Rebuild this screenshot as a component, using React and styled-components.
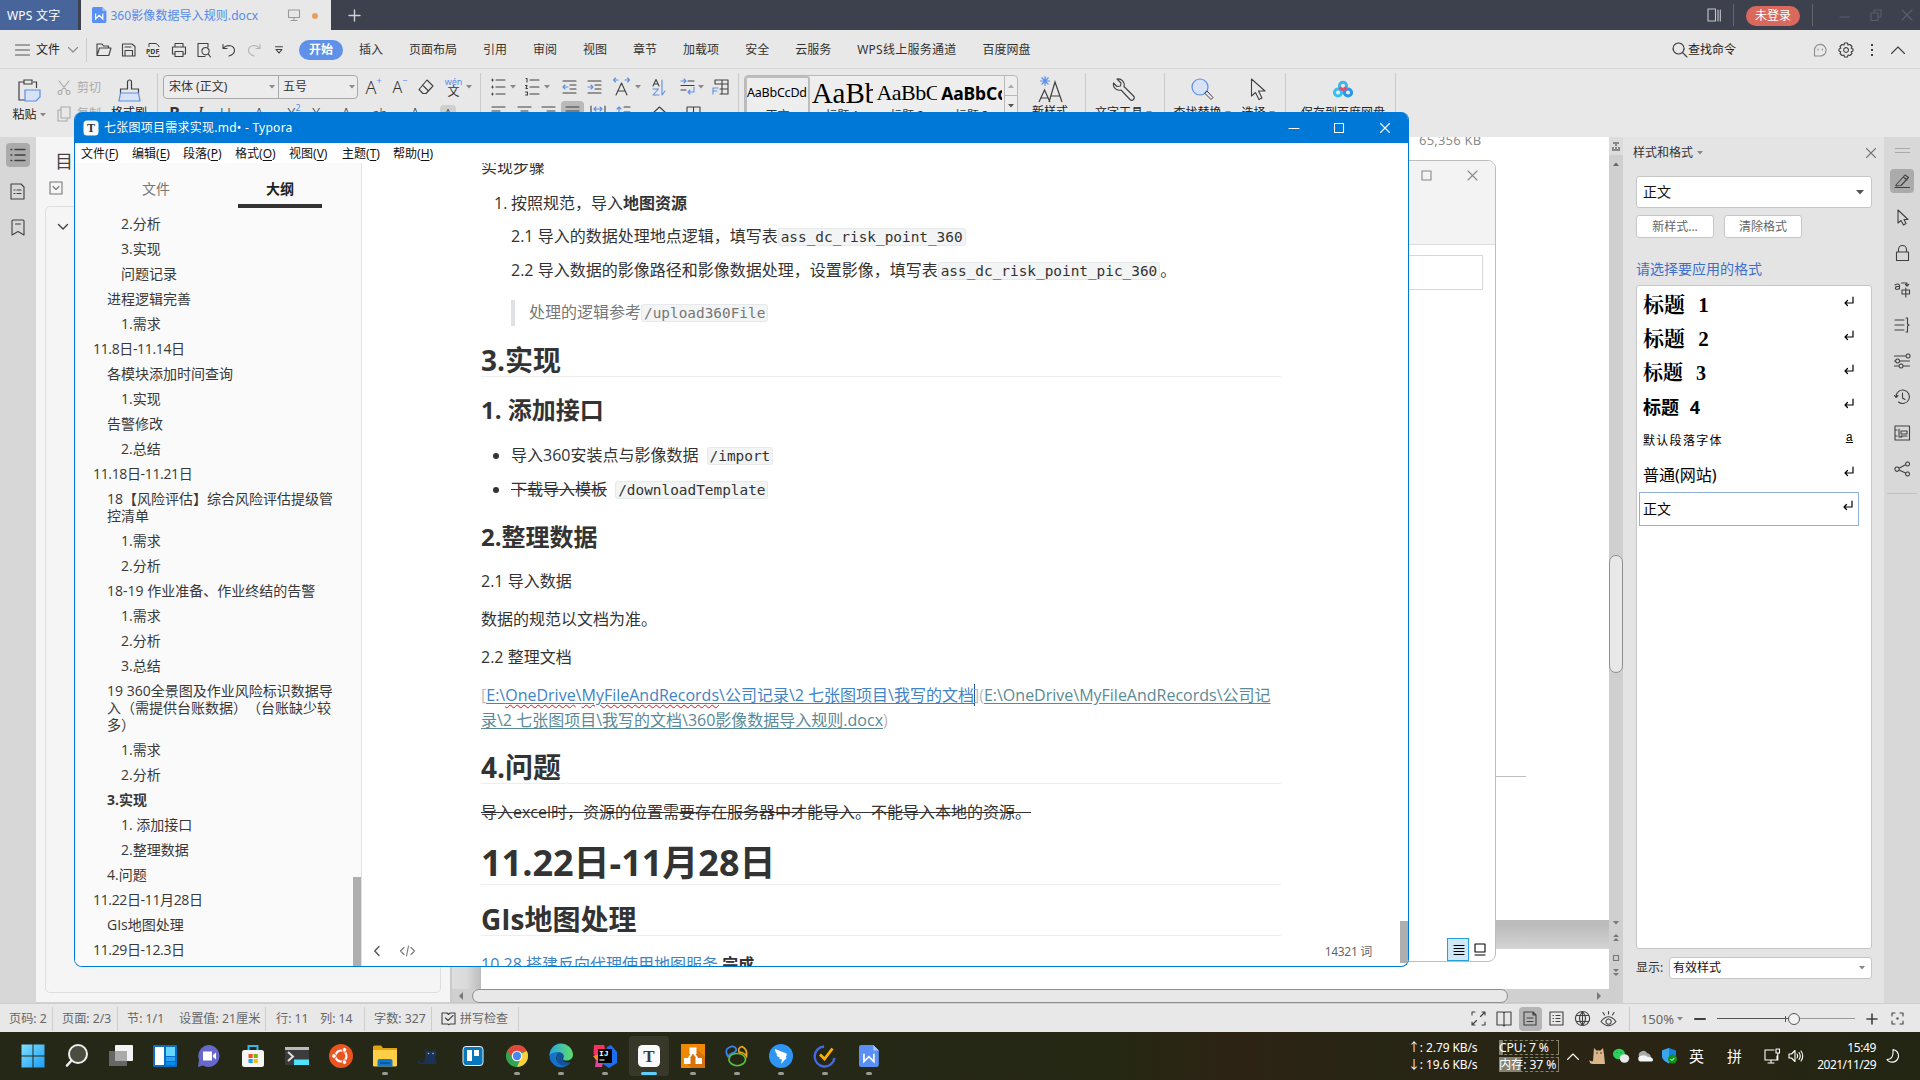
import React from 'react';
import styled, { createGlobalStyle } from 'styled-components';

const UI = `'Noto Sans', 'Noto Sans CJK SC', sans-serif`;
const DOC = `'Open Sans', 'Noto Sans CJK SC', sans-serif`;
const BLUE = '#5b8ee6';
const INK = '#404040';

const Global = createGlobalStyle`
  *, *::before, *::after { box-sizing: border-box; }
  html, body { margin: 0; padding: 0; overflow: hidden; }
  body { font: 12px/16px ${UI}; color: #333; white-space: nowrap; text-spacing-trim: space-all; }
  svg { display: block; flex: none; overflow: visible; }
`;

const Screen = styled.div`
  position: relative; width: 1920px; height: 1080px; overflow: hidden;
  display: flex; flex-direction: column; background: #e8e8e8;
`;

/* A box of fixed width that centres its content */
const Cell = styled.div`
  flex: none; display: flex; align-items: center; justify-content: ${p => p.$j || 'center'};
  width: ${p => p.$w}px; height: ${p => (p.$h ? p.$h + 'px' : 'auto')};
  margin-left: ${p => p.$ml || 0}px;
  background: ${p => p.$bg || 'transparent'}; border-radius: ${p => (p.$bg ? 4 : 0)}px;
`;
const Label = styled.span`
  flex: none; margin-left: ${p => p.$ml || 0}px; color: ${p => p.$c || 'inherit'};
  font-size: ${p => p.$s || 12}px; line-height: ${p => p.$lh || 16}px;
  font-weight: ${p => p.$b || 400}; letter-spacing: ${p => p.$ls || 0}px;
  font-family: ${p => p.$f || 'inherit'}; padding-top: ${p => p.$pt || 0}px;
`;
const Rule = styled.div`
  flex: none; width: 1px; height: ${p => p.$h}px; margin-left: ${p => p.$ml || 0}px;
  margin-top: ${p => p.$mt || 0}px; background: ${p => p.$c || '#cbcbcb'};
`;
const Spring = styled.div`flex: 1;`;

function Icon({ w = 16, h = 16, d, b, f, c = INK, sw = 1.1 }) {
  return (
    <svg width={w} height={h} viewBox={`0 0 ${w} ${h}`} fill="none" stroke={c} strokeWidth={sw} strokeLinecap="round" strokeLinejoin="round">
      {f && <path d={f} fill={c} stroke="none" />}
      {d && <path d={d} />}
      {b && <path d={b} stroke={BLUE} />}
    </svg>
  );
}
const Caret = ({ c = '#888', up }) => <Icon w={6} h={4} c={c} f={up ? 'M0 4L3 0.5L6 4Z' : 'M0 0H6L3 3.5Z'} />;

/* ---------- Title bar ---------- */
const TitleBar = styled.div`
  flex: none; height: 30px; display: flex; align-items: center; background: #3d414d;
`;
const AppTab = styled.div`
  width: 78px; height: 30px; padding-left: 7px; line-height: 32px; background: #47659b; color: #fff; letter-spacing: 0.2px;
`;
const DocTab = styled.div`
  width: 250px; height: 30px; margin-left: 3px; padding-left: 11px; display: flex; align-items: center; background: #e8e8e8; color: #5488ea;
`;
const Dot = styled.div`width: 6px; height: 6px; border-radius: 50%; background: #e8a05c; margin: 1px 0 0 12px;`;
const Login = styled.div`
  width: 54px; height: 20px; margin: 1px 0 0 12px; border-radius: 10px; background: #d9695c; color: #fff; text-align: center; line-height: 19px;
`;

function WpsLogo({ s = 16 }) {
  return (
    <svg width={s * 0.9} height={s} viewBox="0 0 18 20">
      <path d="M2 0H13L18 5V18A2 2 0 0 1 16 20H2A2 2 0 0 1 0 18V2A2 2 0 0 1 2 0Z" fill="#5a90f5" />
      <path d="M13 0L18 5H13Z" fill="#a9c6fb" />
      <path d="M4.5 8V15L9 10.5L13.5 15V8" fill="none" stroke="#fff" strokeWidth="1.5" />
    </svg>
  );
}

function Title() {
  return (
    <TitleBar>
      <AppTab>WPS 文字</AppTab>
      <DocTab>
        <WpsLogo s={16} />
        <Label $ml={4} $pt={2} $ls={0.08}>360影像数据导入规则.docx</Label>
        <Cell $w={12} $ml={30}><Icon w={12} h={12} c="#999" d="M0.5 1H11.5V8.5H0.5ZM6 8.5V11.5M3 11.5H9" /></Cell>
        <Dot />
      </DocTab>
      <Cell $w={46}><Icon w={13} h={13} c="#d0d1d4" sw={1.4} d="M6.5 1V12M1 6.5H12" /></Cell>
      <Spring />
      <Icon w={14} h={14} c="#c5c7cc" d="M1 1H8.5V13H1ZM11 2V13M13.3 2V13" />
      <Rule $h={22} $ml={12} $c="#62666f" />
      <Login>未登录</Login>
      <Rule $h={22} $ml={12} $c="#62666f" />
      <Cell $w={10} $ml={27}><Icon w={10} h={10} c="#5b5f6b" d="M0 7H9.5" /></Cell>
      <Cell $w={12} $ml={20}><Icon w={12} h={12} c="#5b5f6b" d="M1 4H8V11.5H1ZM4 4V1H11V8H8" /></Cell>
      <Cell $w={12} $ml={19}><Icon w={12} h={12} c="#5b5f6b" d="M1 1L11 11M11 1L1 11" /></Cell>
      <Cell $w={7} />
    </TitleBar>
  );
}

/* ---------- Menu row ---------- */
const MenuRow = styled.div`
  flex: none; height: 39px; padding: 1px 0 0 15px; display: flex; align-items: center;
  border-bottom: 1px solid #d6d6d6; background: #e8e8e8;
`;
const Tab = styled.div`margin-right: 26px; line-height: 16px; padding-top: 1px; letter-spacing: ${p => p.$ls || 0}px;`;
const ActiveTab = styled.div`
  width: 44px; height: 20px; margin: 0 16px 0 8px; border-radius: 10px; background: #5f91ea; color: #fff;
  font-weight: 700; text-align: center; line-height: 20px;
`;
const quick = [
  'M1 13.5V2H6L7.5 4H12.5V6M1 13.5L3.5 6H15L12.8 13.5Z',
  'M1.5 2H11L14 4.5V14H1.5ZM4 5H10M4 14V8.5H11.5V14',
  'M3 5V1.5H10L13 4V5M3 12.5V14.5H13V12.5',
  'M4 5V1.5H12V5M3.5 12H1.5V5H14.5V12H12.5M4 9.5H12V14.5H4Z',
  'M9 14.5H2V1.5H12V5M9.5 5.5A3.7 3.7 0 1 0 9.6 5.5M12 11.7L14.5 15',
];
function Menu() {
  return (
    <MenuRow>
      <Icon w={15} h={12} c="#555" d="M0.5 1H14.5M0.5 6H14.5M0.5 11H14.5" />
      <Label $ml={6} $c="#222">文件</Label>
      <Cell $w={10} $ml={8}><Icon w={10} h={6} c="#888" d="M0.5 0.5L5 5L9.5 0.5" /></Cell>
      <Rule $h={24} $ml={8} />
      {quick.map((d, i) => (
        <Cell key={i} $w={25} $ml={i ? 0 : 4}>
          {i === 2
            ? <svg width="16" height="16" fill="none" stroke={INK}><path d={d} /><text x="0" y="11.6" fontSize="7" fontWeight="700" fontFamily="Noto Sans" stroke="none" fill={INK}>PDF</text></svg>
            : <Icon d={d} />}
        </Cell>
      ))}
      <Cell $w={26}><Icon w={14} h={14} d="M1 1.5V5.5H5M1.2 5.2C5 1 12.5 2 12.5 7.5C12.5 10 10 12 7 13" /></Cell>
      <Cell $w={24}><Icon w={14} h={14} c="#b4b4b4" d="M13 1.5V5.5H9M12.8 5.2C9 1 1.5 2 1.5 7.5C1.5 10 4 12 7 13" /></Cell>
      <Cell $w={25}><Icon w={8} h={8} d="M0.5 0.8H7.5M1 3.5H7L4 6.8Z" /></Cell>
      <ActiveTab>开始</ActiveTab>
      {['插入', '页面布局', '引用', '审阅', '视图', '章节', '加载项', '安全', '云服务', 'WPS线上服务通道', '百度网盘'].map(t => <Tab key={t} $ls={t[0] === 'W' ? 0.25 : 0}>{t}</Tab>)}
      <Spring />
      <Icon w={16} h={16} d="M6.5 1A5.5 5.5 0 1 0 6.6 1M10.5 10.5L15 15" />
      <Label $c="#222">查找命令</Label>
      <Cell $w={14} $ml={77}><Icon w={14} h={14} c="#8c8c8c" d="M1.5 13V7A5.8 5.8 0 1 1 7 13ZM5 6V7M9.3 6V7" /></Cell>
      <Cell $w={16} $ml={11}>
        <Icon w={16} h={16} d="M6.5 1H9.5L10 3L12 2.5L14 4.5L13.2 6.3L15 7V9L13.2 9.7L14 11.5L12 13.5L10 13L9.5 15H6.5L6 13L4 13.5L2 11.5L2.8 9.7L1 9V7L2.8 6.3L2 4.5L4 2.5L6 3ZM8 5.6A2.4 2.4 0 1 0 8.1 5.6" />
      </Cell>
      <Cell $w={4} $ml={16}><Icon w={4} h={14} f="M1 1H3V3H1ZM1 6H3V8H1ZM1 11H3V13H1Z" /></Cell>
      <Cell $w={14} $ml={17}><Icon w={14} h={8} d="M0.5 7.5L7 1L13.5 7.5" /></Cell>
      <Cell $w={15} />
    </MenuRow>
  );
}

/* ---------- Ribbon ---------- */
const Ribbon = styled.div`
  flex: none; height: 68px; display: flex; align-items: flex-start; overflow: hidden; background: #e8e8e8;
`;
const Rows = styled.div`flex: none; display: flex; flex-direction: column; gap: 2px; padding-top: 6px; margin-left: ${p => p.$ml || 0}px; width: ${p => p.$w}px;`;
const Row = styled.div`display: flex; align-items: center; height: 24px; padding-top: ${p => p.$pt || 0}px;`;
const Big = styled.div`
  flex: none; width: ${p => p.$w}px; margin-left: ${p => p.$ml || 0}px; padding: ${p => p.$pt || 7}px 0 0 ${p => p.$pl || 0}px; display: flex; flex-direction: column; align-items: center;
  color: #222;
`;
const BigLabel = styled.div`margin-top: ${p => p.$mt || 5}px; display: flex; align-items: center; gap: 3px; line-height: 16px;`;
const FontBox = styled.div`
  flex: none; width: 195px; height: 24px; display: flex; align-items: center; border: 1px solid #a9a9a9; border-radius: 4px; background: #ececec;
`;
const FontName = styled.div`
  width: ${p => p.$w}px; height: 22px; display: flex; align-items: center; justify-content: space-between; padding: 0 ${p => p.$pr}px 0 ${p => p.$pl}px;
  border-right: ${p => (p.$last ? 0 : 1)}px solid #a9a9a9;
`;
const Gallery = styled.div`
  flex: none; display: flex; margin: 6px 0 0 5px; width: 274px; height: 62px; border: 1px solid #b9b9b9; border-radius: 4px; background: #eee;
`;
const Sample = styled.div`
  width: 65px; height: 60px; overflow: hidden; display: flex; flex-direction: column; align-items: center; color: #000;
  border: ${p => (p.$on ? '2px solid #bdbdbd' : '0')}; border-radius: 3px; padding-top: ${p => (p.$on ? 0 : 2)}px;
  font-family: ${p => p.$f}; 
`;
const SampleText = styled.div`
  width: 61px; overflow: hidden; height: 30px; line-height: 30px; font-size: ${p => p.$s}px; font-weight: ${p => p.$b || 400}; letter-spacing: ${p => p.$ls || 0}px;
`;
const SampleName = styled.div`font: 12px/16px ${UI}; color: #333;`;
const GalleryScroll = styled.div`
  width: 13px; height: 60px; border-left: 1px solid #b9b9b9; display: flex; flex-direction: column;
  & > div { width: 12px; height: 20px; border-bottom: 1px solid #b9b9b9; display: flex; align-items: center; justify-content: center; }
`;
const Wen = styled.div`display: flex; flex-direction: column; align-items: center; line-height: 9px; font-size: 9px; color: ${BLUE}; span { font-size: 12px; line-height: 12px; color: #333; }`;
const SupBlue = styled.span`color: ${BLUE}; font-size: 9px; line-height: 10px; align-self: flex-start; margin-top: ${p => p.$t || 0}px;`;
const Letter = styled(Label)`font-weight: 300; text-decoration: ${p => p.$u ? 'underline' : 'none'}; font-style: ${p => p.$i ? 'italic' : 'normal'};`;

function BaiduMark() {
  return (
    <svg width="20" height="17" viewBox="0 0 20 17" fill="none" strokeWidth="3">
      <circle cx="5" cy="11.5" r="3.6" stroke="#35c1f1" /><circle cx="15" cy="11.5" r="3.6" stroke="#2a97ea" />
      <circle cx="10" cy="4.8" r="3.6" stroke="#3cb7ee" /><path d="M6.6 6.3Q9 10.5 13.4 6.3" stroke="#f04a6a" />
    </svg>
  );
}

function RibbonBar() {
  return (
    <Ribbon>
      <Big $w={46} $ml={6} $pt={10}>
        <svg width="23" height="23" fill="none" stroke={INK} strokeWidth="1.2"><path d="M6 3H1V21H7M15 3H18.500V9M6 1H14V5H6Z" /><path d="M7 11H22V18L18 22H7Z" fill="#d7e2f6" stroke={BLUE} /></svg>
        <BigLabel>粘贴 <Caret /></BigLabel>
      </Big>
      <Rows $ml={5} $w={50}>
        <Row $pt={1}><Icon w={14} h={15} c="#a9a9a9" d="M2 1L10 11M12 1L4 11M3 10.500A2 2 0 1 0 3.100 10.500M11 10.500A2 2 0 1 0 11.100 10.500" /><Label $ml={6} $c="#aaa">剪切</Label></Row>
        <Row $pt={2}><Icon w={14} h={16} c="#a9a9a9" d="M4 1H13V12H4ZM4 4H1V15H10V12" /><Label $ml={6} $c="#aaa">复制</Label></Row>
      </Rows>
      <Big $w={44} $pt={10}>
        <svg width="23" height="23" fill="none" stroke={INK} strokeWidth="1.2"><path d="M2.500 14V10H9.500V3A2 2 0 0 1 13.500 3V10H20.500V14" /><path d="M2.500 14H20.500L22 22H1Z" fill="#d7e2f6" stroke={BLUE} /></svg>
        <BigLabel $mt={3}>格式刷</BigLabel>
      </Big>
      <Rule $h={64} $ml={6} $mt={4} />
      <Rows $ml={5} $w={317}>
        <Row>
          <FontBox>
            <FontName $w={115} $pl={5} $pr={3}>宋体 (正文) <Caret /></FontName>
            <FontName $w={78} $pl={4} $pr={2} $last>五号 <Caret /></FontName>
          </FontBox>
          <Cell $w={31} $h={24}><Letter $s={18} $lh={22}>A</Letter><SupBlue $t={1}>+</SupBlue></Cell>
          <Cell $w={22} $h={24}><Letter $s={16} $lh={22}>A</Letter><SupBlue $t={1}>−</SupBlue></Cell>
          <Cell $w={30}><Icon w={16} h={16} d="M9 1L15 7L8 14.500H5L1 10.500ZM4.500 6L10.500 12" /></Cell>
          <Cell $w={25}><Wen>wén<span>文</span></Wen></Cell>
          <Cell $w={6}><Caret /></Cell>
        </Row>
        <Row>
          <Cell $w={23}><Label $s={16} $b={700}>B</Label></Cell>
          <Cell $w={29}><Letter $s={16} $i $f="'Liberation Serif', serif">I</Letter></Cell>
          <Cell $w={21}><Letter $s={15} $u>U</Letter></Cell>
          <Cell $w={46}><Letter $s={15}>A</Letter></Cell>
          <Cell $w={24} $h={20}><Letter $s={15}>X</Letter><SupBlue>2</SupBlue></Cell>
          <Cell $w={20}><Letter $s={15}>X</Letter></Cell>
          <Cell $w={40}><Letter $s={15}>A</Letter></Cell>
          <Cell $w={28}><Letter $s={13}>ab</Letter></Cell>
          <Cell $w={42}><Letter $s={15}>A</Letter></Cell>
          <Cell $w={16} $ml={4} $h={16} $bg="#cfcfcf"><Letter $s={13}>A</Letter></Cell>
        </Row>
      </Rows>
      <Rule $h={64} $mt={4} />
      <Rows $ml={6} $w={251}>
        <Row>
          <Cell $w={22}><Icon w={15} h={18} d="M5 2H14M5 9H14M5 16H14M1.500 1V3M1.500 8V10M1.500 15V17M0.800 2H2.200M0.800 9H2.200M0.800 16H2.200" /></Cell>
          <Cell $w={8}><Caret /></Cell>
          <Cell $w={22} $ml={4}><Icon w={15} h={18} d="M5 2H14M5 9H14M5 16H14M1 0.500H2V4M0.500 7.500H2L1 10.500H2.500M0.500 14H2.500V17H0.500" /></Cell>
          <Cell $w={8}><Caret /></Cell>
          <Cell $w={24} $ml={6}><Icon w={15} h={14} d="M1 1H14M8 5H14M8 9H14M1 13H14" b="M6 7H1M3 5L1 7L3 9" /></Cell>
          <Cell $w={26}><Icon w={15} h={14} d="M1 1H14M8 5H14M8 9H14M1 13H14" b="M1 7H6M4 5L6 7L4 9" /></Cell>
          <Cell $w={26} $ml={2}><Icon w={18} h={18} d="M3 17L8.500 5L14 17M5 13H12" b="M5 2H0.500M2.500 0L0.500 2L2.500 4M12 2H16.500M14.500 0L16.500 2L14.500 4" /></Cell>
          <Cell $w={5}><Caret /></Cell>
          <Cell $w={20} $ml={9}><Icon w={14} h={17} d="M1 7L4 0.500L7 7M2 5H6" b="M1 10H6.500L1 16H7M10 1V16L13 12" /></Cell>
          <Cell $w={18} $ml={10}><Icon w={16} h={16} d="M8 2H14M1 6.500H14M1 11H6" b="M1 2H6M4 0L6 2L4 4M14 8V13H8M10 11L8 13L10 15" /></Cell>
          <Cell $w={8}><Caret /></Cell>
          <Cell $w={22} $ml={4}><Icon w={17} h={16} d="M3 5V1H16V15H8M3 5H16M10 1V15M8 10H16" b="M1 15V9H6M1 12H5" /></Cell>
        </Row>
        <Row>
          <Cell $w={22}><Icon w={15} h={14} d="M1 1H14M1 5H9M1 9H14M1 13H9" /></Cell>
          <Cell $w={26} $ml={2}><Icon w={15} h={14} d="M1 1H14M4 5H11M1 9H14M4 13H11" /></Cell>
          <Cell $w={22}><Icon w={15} h={14} d="M1 1H14M6 5H14M1 9H14M6 13H14" /></Cell>
          <Cell $w={23} $ml={2} $h={24} $bg="#b9b9b9"><Icon w={15} h={14} d="M1 1H14M1 5H14M1 9H14M1 13H14" /></Cell>
          <Cell $w={22} $ml={3}><Icon w={16} h={14} d="M1 0V14M15 0V14M4 9H12" b="M4 3H12M6 1L4 3L6 5M10 1L12 3L10 5" /></Cell>
          <Cell $w={26} $ml={1}><Icon w={15} h={14} d="M8 1H14M8 6H14M8 11H14" b="M3 13V1M1 3L3 1L5 3" /></Cell>
          <Cell $w={22} $ml={13}><Icon w={16} h={14} d="M1 7L7.500 1L14 7L8 13Z" /></Cell>
          <Cell $w={22} $ml={11}><Icon w={15} h={14} d="M1 1H14V13H1ZM7.500 1V13M1 7H14" /></Cell>
        </Row>
      </Rows>
      <Rule $h={64} $mt={4} />
      <Gallery>
        <Sample $on $f={UI}><SampleText $s={12.5} $ls={-0.2}>AaBbCcDd</SampleText><SampleName>正文</SampleName></Sample>
        <Sample $f="'Liberation Serif', 'DejaVu Serif', serif"><SampleText $s={29} $ls={0}>AaBbC</SampleText><SampleName>标题 1</SampleName></Sample>
        <Sample $f="'Liberation Serif', serif"><SampleText $s={22} $ls={-0.5}>AaBbC</SampleText><SampleName>标题 2</SampleName></Sample>
        <Sample $f={UI}><SampleText $s={17.5} $b={700} $ls={-0.1}>AaBbCc</SampleText><SampleName>标题 3</SampleName></Sample>
        <GalleryScroll><div><Caret up c="#aaa" /></div><div><Caret c="#555" /></div><div /></GalleryScroll>
      </Gallery>
      <Big $w={64}>
        <svg width="25" height="27" fill="none" stroke={INK} strokeWidth="1.2"><path d="M1 26L6.500 14L12 26M3 22H10M11 26L17 6L24 26M13.500 20H21.500" /><path d="M7 0V10M2 5H12M3.500 1.500L10.500 8.500M10.500 1.500L3.500 8.500" stroke={BLUE} /></svg>
        <BigLabel $mt={1}>新样式</BigLabel>
      </Big>
      <Rule $h={64} $ml={3} $mt={4} />
      <Big $w={75} $pt={9}>
        <Icon w={23} h={23} d="M5 1L9 5L8.500 8L5 8.500L1.500 5A6 6 0 0 0 9 12L18 21.500A2.200 2.200 0 0 0 21.500 18L12 8.500A6 6 0 0 0 5 1Z" />
        <BigLabel $mt={4}>文字工具 <Caret /></BigLabel>
      </Big>
      <Rule $h={64} $ml={3} $mt={4} />
      <Big $w={74} $pt={9}>
        <svg width="23" height="23" fill="none"><circle cx="9" cy="9" r="8" fill="#d7e2f6" stroke={BLUE} strokeWidth="1.200" /><path d="M14.500 14L16 13L22 19.500L20 21.500L14 15.500Z" stroke={INK} /></svg>
        <BigLabel $mt={4}>查找替换 <Caret /></BigLabel>
      </Big>
      <Big $w={36} $ml={1} $pt={9}>
        <Icon w={17} h={23} d="M1.500 1V18L5.500 14.500L9 21.500L12 20L8.500 13H15Z" />
        <BigLabel $mt={4}>选择 <Caret /></BigLabel>
      </Big>
      <Rule $h={64} $ml={9} $mt={4} />
      <Big $w={109} $pl={5} $pt={12}>
        <BaiduMark />
        <BigLabel $mt={7}>保存到百度网盘</BigLabel>
      </Big>
      <Rule $h={64} $mt={4} />
    </Ribbon>
  );
}

/* ---------- Work area ---------- */
const Work = styled.div`flex: none; height: 866px; display: flex;`;
const LeftBar = styled.div`width: 36px; background: #d7d7d7; display: flex; flex-direction: column; align-items: center; padding-top: 6px;`;
const LeftBtn = styled.div`
  width: 24px; height: 24px; margin-bottom: 12px; border-radius: 4px; display: flex; align-items: center; justify-content: center;
  background: ${p => (p.$on ? '#ababab' : 'transparent')}; padding-right: ${p => (p.$on ? 0 : 1)}px;
`;
const Nav = styled.div`width: 414px; background: #f5f5f5; padding: 14px 9px 9px 9px; display: flex; flex-direction: column; border-bottom: 1px solid #d0d0d0;`;
const NavTitle = styled.div`font-size: 18px; line-height: 20px; padding-left: 10px; color: #444;`;
const NavTool = styled.div`padding: 10px 0 11px 4px;`;
const NavBox = styled.div`flex: 1; border: 1px solid #dedede; border-radius: 5px; padding: 17px 12px; `;
const Canvas = styled.div`width: 1159px; border-left: 2px solid #cacaca; display: flex; flex-direction: column;`;
const Pages = styled.div`height: 852px; display: flex; overflow: hidden;`;
const PageEdge = styled.div`width: 29px; background: linear-gradient(90deg, #dedede, #dadada 50%, #bcbcbc);`;
const PageCol = styled.div`flex: 1; display: flex; flex-direction: column; align-items: flex-end;`;
const Page = styled.div`width: 100%; height: ${p => p.$h}px; background: #fff; overflow: hidden; display: flex; flex-direction: column; align-items: flex-end;`;
const SizeText = styled.div`
  align-self: flex-start; margin-left: 938px; margin-top: -6px; height: 20px; line-height: 19px; font-size: 13px; letter-spacing: 0.2px; color: #8c8c8c;
`;
const PageLine = styled.div`height: 1px; width: 83px; margin: 625px 83px 0 0; background: #bfbfbf;`;
const PageGap = styled.div`width: 100%; height: 29px; background: linear-gradient(180deg, #bcbcbc 20%, #d4d4d4);`;
const HBar = styled.div`height: 14px; display: flex; align-items: center; background: #d0d0d0; border-bottom: 1px solid #c8c8c8; padding-left: 6px;`;
const HThumb = styled.div`width: 1036px; height: 14px; margin-left: 8px; border: 1px solid #8f8f8f; border-radius: 7px; background: #e8e8e8;`;
const VBar = styled.div`width: 14px; background: #cfcfcf; display: flex; flex-direction: column; align-items: center;`;
const VTop = styled.div`height: 18px; width: 14px; background: #dcdcdc; display: flex; justify-content: center; padding-top: 5px; margin-bottom: 7px;`;
const VThumb = styled.div`width: 14px; height: 118px; margin: 389px 0 248px; border: 1px solid #8f8f8f; border-radius: 7px; background: #e8e8e8;`;

const Panel = styled.div`width: 261px; background: #e4e4e4; padding: 8px 12px 0 13px; display: flex; flex-direction: column;`;
const PanelHead = styled.div`height: 16px; margin-left: -3px; margin-right: -4px; display: flex; align-items: center; gap: 4px;`;
const Combo = styled.div`
  height: ${p => p.$h}px; width: ${p => p.$w || 236}px; margin-top: ${p => p.$mt || 0}px; border: 1px solid #c6c6c6; border-radius: 3px; background: #fff; display: flex; align-items: center; justify-content: space-between;
  padding: 0 ${p => p.$pr || 7}px 0 ${p => p.$pl || 6}px; color: #111; font-size: ${p => p.$s || 14}px;
`;
const Buttons = styled.div`display: flex; gap: 10px; margin-top: 7px;`;
const Btn = styled.div`width: 78px; height: 23px; border: 1px solid #c6c6c6; border-radius: 3px; background: #fff; text-align: center; line-height: 22px; color: #666;`;
const Hint = styled.div`margin-top: 21px; font-size: 14px; line-height: 20px; color: #3e6fcb;`;
const List = styled.div`width: 236px; height: 664px; margin-top: 6px; border: 1px solid #c6c6c6; border-radius: 3px; background: #fff; padding: 2px;`;
const Item = styled.div`
  width: 220px; height: 34px; display: flex; align-items: center; justify-content: space-between; padding: 0 5px 0 ${p => (p.$on ? 3 : 4)}px;
  border: ${p => (p.$on ? 1 : 0)}px solid #8fb0dc; color: #000;
  & > :last-child { margin-bottom: 7px; }
`;
const ItemName = styled(Label)`word-spacing: ${p => p.$ws || 0}px;`;
const ShowRow = styled.div`display: flex; align-items: center; justify-content: space-between; margin-top: 8px;`;
const SideBar = styled.div`width: 36px; background: #d8d8d8; display: flex; flex-direction: column; align-items: center; padding-top: 11px;`;
const Grip = styled.div`width: 15px; height: 5px; margin-bottom: 16px; border: solid #aaa; border-width: 1px 0;`;
const SideBtn = styled.div`
  width: 24px; height: 24px; margin-bottom: 12px; border-radius: 4px; display: flex; align-items: center; justify-content: center;
  background: ${p => (p.$on ? '#ababab' : 'transparent')};
`;
const sideIcons = [
  'M1 14.500H15.500M2 12L11 2L14.500 4.500L7 12.500L2 13ZM10 4.500L13 7',
  'M4 1V14L7 11.500L9.500 16L12 14.500L10 10.500H14Z',
  'M2.500 7H14.500V15.500H2.500ZM4.500 7V4.500A4 4 0 0 1 12.500 4.500V7',
  'M1 4Q4 2 5.500 4V8M5.500 5.500H2.500Q0 8 3 8.500Q5 8 5.500 7M7.500 2H13V5M11.500 3.500L13 5L14.800 3.500M8 9H15.500V13H8ZM11.800 7V16',
  'M1 3H10M1 8H10M1 13H10M12 1H13.500V7L15 8L13.500 9V15H12',
  'M0.500 3H12M14 1A2 2 0 1 0 14.100 1M0.500 8H2M3.500 6A2 2 0 1 0 3.600 6M6 8H15.500M0.500 13H5M7 11A2 2 0 1 0 7.100 11M9.500 13H15.500',
  'M2 8A6.700 6.700 0 1 1 4.500 13M0.500 6.500L2 8.500L4 6.500M8.500 4V9L11 10.500',
  'M1 1H15.500V15H1ZM1 5H3M1 11H3M5 4V12H8M7 6H13V9H7ZM7 11H13',
  'M3 6A2.200 2.200 0 1 0 3.100 6M13.500 1A2 2 0 1 0 13.600 1M13.500 11A2 2 0 1 0 13.600 11M5 7.200L11.500 3.800M5 9L11.500 12',
];
const Enter = () => <Icon w={10} h={10} c="#000" sw={1.2} d="M9 0V6H1M3.500 3.500L1 6L3.500 8.500" />;
const CharMark = styled.span`font: 12px/12px 'Liberation Mono', monospace; text-decoration: underline; margin-right: 1px;`;

const SERIF = `'Liberation Serif', 'Noto Serif CJK SC', 'Noto Sans CJK SC', serif`;
const styles = [
  { t: '标题 1', s: 21, b: 700, f: SERIF, ws: 8 },
  { t: '标题 2', s: 21, b: 700, f: SERIF, ws: 8 },
  { t: '标题 3', s: 20, b: 700, f: SERIF, ws: 8 },
  { t: '标题 4', s: 18, b: 700, f: UI, ws: 6 },
  { t: '默认段落字体', s: 12, b: 400, f: UI, ls: 1.3 },
  { t: '普通(网站)', s: 16, b: 400, f: UI },
  { t: '正文', s: 14, b: 400, f: UI, on: true },
];

function WorkArea() {
  return (
    <Work>
      <LeftBar>
        <LeftBtn $on><Icon w={16} h={14} d="M5 1.500H15M5 7H15M5 12.500H15M1 1.500H1.800M1 7H1.800M1 12.500H1.800" sw={1.4} /></LeftBtn>
        <LeftBtn><Icon w={15} h={17} d="M1 1H11L14 4V16H1ZM4 7H5M7 7H11M4 10.500H5M7 10.500H11" /></LeftBtn>
        <LeftBtn><Icon w={14} h={17} d="M1 2A1 1 0 0 1 2 1H12A1 1 0 0 1 13 2V16L7 12.500L1 16ZM4.500 5H9.500" /></LeftBtn>
      </LeftBar>
      <Nav>
        <NavTitle>目录</NavTitle>
        <NavTool><Icon w={14} h={14} c="#777" d="M1 1H13V13H1ZM4 5.500L7 8.500L10 5.500" /></NavTool>
        <NavBox><Icon w={10} h={6} d="M0.500 0.500L5 5L9.500 0.500" sw={1.4} /></NavBox>
      </Nav>
      <Canvas>
        <Pages>
          <PageEdge />
          <PageCol>
            <Page $h={783}><SizeText>65,356 KB</SizeText><PageLine /></Page>
            <PageGap />
            <Page $h={40} />
          </PageCol>
        </Pages>
        <HBar>
          <Icon w={6} h={8} c="#777" f="M5 0V8L1 4Z" />
          <HThumb />
          <Spring />
          <Cell $w={6}><Icon w={6} h={8} c="#777" f="M1 0V8L5 4Z" /></Cell>
          <Cell $w={7} />
        </HBar>
      </Canvas>
      <VBar>
        <VTop><Icon w={8} h={9} c="#888" f="M1 0H7V2H5V4H3V2H1ZM0 5H2V7H3V5H5V7H6V5H8V9H0Z" /></VTop>
        <Caret up c="#666" />
        <VThumb />
        <Icon w={6} h={55} c="#777" f="M0 0H6L3 3.500ZM0 16L3 13L6 16ZM0 20L3 17L6 20ZM0 48H6L3 51ZM0 52H6L3 55Z" d="M0.500 34.500H5.500V39.500H0.500Z" />
      </VBar>
      <Panel>
        <PanelHead><span>样式和格式</span><Caret /><Spring /><Icon w={10} h={10} c="#777" d="M0.500 0.500L9.500 9.500M9.500 0.500L0.500 9.500" /></PanelHead>
        <Combo $h={32} $mt={15}>正文<Icon w={8} h={5} c="#555" f="M0 0H8L4 4.500Z" /></Combo>
        <Buttons><Btn>新样式...</Btn><Btn>清除格式</Btn></Buttons>
        <Hint>请选择要应用的格式</Hint>
        <List>
          {styles.map(s => (
            <Item key={s.t} $on={s.on}>
              <ItemName $s={s.s} $b={s.b} $f={s.f} $ls={s.ls} $lh={30} $ws={s.ws}>{s.t}</ItemName>
              {s.s === 12 ? <CharMark>a</CharMark> : <Enter />}
            </Item>
          ))}
        </List>
        <ShowRow>显示:<Combo $h={22} $w={203} $pl={3} $pr={6} $s={12}>有效样式<Caret /></Combo></ShowRow>
      </Panel>
      <SideBar>
        <Grip />
        {sideIcons.map((d, i) => <SideBtn key={i} $on={i === 0}><Icon w={16} h={16} d={d} /></SideBtn>)}
        <Cell $w={30} $h={1} $bg="#c2c2c2" />
      </SideBar>
    </Work>
  );
}

/* ---------- Status bar ---------- */
const Status = styled.div`flex: none; height: 29px; border-top: 1px solid #cfcfcf; background: #e8e8e8; display: flex; align-items: center; color: #666; padding: 1px 0 0 8px;`;
const Stat = styled.div`flex: none; width: ${p => p.$w}px; height: 24px; line-height: 24px; border-right: ${p => (p.$r ? 1 : 0)}px solid #cdcdcd; padding-left: ${p => p.$pl || 0}px; display: flex; align-items: center; font-size: 12.2px;`;
const Slider = styled.div`width: 138px; height: 14px; margin-left: 11px; display: flex; align-items: center;`;
const Track = styled.div`height: 1px; width: ${p => p.$w}px; background: ${p => p.$c};`;
const Knob = styled.div`width: 12px; height: 12px; border: 1px solid #555; border-radius: 50%; background: #f2f2f2;`;

function StatusBar() {
  return (
    <Status>
      <Stat $w={45} $r $pl={1}>页码: 2</Stat>
      <Stat $w={65} $r $pl={9}>页面: 2/3</Stat>
      <Stat $w={61} $pl={9}>节: 1/1</Stat>
      <Stat $w={87} $r>设置值: 21厘米</Stat>
      <Stat $w={54} $pl={10}>行: 11</Stat>
      <Stat $w={45} $r>列: 14</Stat>
      <Stat $w={67} $r $pl={9}>字数: 327</Stat>
      <Stat $w={87} $r $pl={9}>
        <Icon w={15} h={13} d="M7 12H1V1H6L7.500 2.500L9 1H14V12H9L7.500 12.800ZM4.500 6L7 8.500L12 3.500" />
        <Label $ml={4}>拼写检查</Label>
      </Stat>
      <Spring />
      <Icon w={15} h={15} d="M1 4V1H4M11 1H14V4M14 11V14H11M4 14H1V11M9.500 5.500L13.500 1.500M5.500 9.500L1.500 13.500" />
      <Cell $w={16} $ml={10}><Icon w={16} h={15} d="M1 1H7L8 2L9 1H15V14H9L8 15L7 14H1ZM8 2V14" /></Cell>
      <Cell $w={23} $h={24} $ml={7} $bg="#b5b5b5"><Icon w={14} h={15} d="M1 1H10L13 4V14H1ZM4 7H10M4 10.500H10M10 1V4H13" /></Cell>
      <Cell $w={15} $ml={7}><Icon w={15} h={15} d="M1 1H14V14H1ZM4 4.500H4.500M7 4.500H11M4 7.500H4.500M7 7.500H11M4 10.500H4.500M7 10.500H11" /></Cell>
      <Cell $w={15} $ml={11}><Icon w={15} h={15} d="M7.500 0.500A7 7 0 1 0 7.600 0.500M7.500 0.500Q1.500 7.500 7.500 14.500Q13.500 7.500 7.500 0.500M7.500 0.500V14.500M1.500 4.500H13.500M1.500 10.500H13.500" /></Cell>
      <Cell $w={17} $ml={10}><Icon w={17} h={16} d="M1 10.500Q8.500 1 16 10.500Q8.500 19 1 10.500ZM8.500 8A2.600 2.600 0 1 0 8.600 8M8.500 0.500V3M3 1.500L4.500 4M14 1.500L12.500 4" /></Cell>
      <Rule $h={24} $ml={12} />
      <Label $ml={11} $s={13}>150%</Label>
      <Cell $w={6} $ml={3}><Caret /></Cell>
      <Cell $w={12} $ml={11}><Icon w={12} h={2} sw={2} d="M1 1H11" /></Cell>
      <Slider>
        <Track $w={68} $c="#555" /><Rule $h={6} $c="#555" /><Track $w={2} $c="#555" />
        <Knob /><Track $w={55} $c="#999" />
      </Slider>
      <Cell $w={12} $ml={11}><Icon w={12} h={12} sw={1.6} d="M6 1V11M1 6H11" /></Cell>
      <Cell $w={13} $ml={13}><Icon w={13} h={13} d="M1 4V1H4M9 1H12V4M12 9V12H9M4 12H1V9" f="M5.500 5.500H7.500V7.500H5.500Z" /></Cell>
      <Cell $w={16} />
    </Status>
  );
}

/* ---------- Taskbar ---------- */
const Taskbar = styled.div`
  flex: none; height: 48px; padding-left: 11px; display: flex; align-items: center; color: #fff;
  background: linear-gradient(90deg, #262817 0%, #262817 45%, #252813 58%, #2d2314 64%, #272513 72%, #2a2414 86%, #222613 100%);
`;
const Task = styled.div`
  flex: none; position: relative; width: 40px; height: 40px; margin: 0 2px; border-radius: 4px; display: flex; align-items: center; justify-content: center;
  background: ${p => (p.$on ? 'rgba(255,255,255,0.08)' : 'transparent')};
  &::after { content: ''; position: absolute; bottom: 1px; left: ${p => (p.$on ? 12 : 17)}px; width: ${p => (p.$on ? 16 : 6)}px; height: 3px; border-radius: 2px;
    background: ${p => (p.$on ? '#60cdff' : '#9a9a94')}; display: ${p => (p.$run ? 'block' : 'none')}; }
`;
const Meter = styled.div`display: flex; flex-direction: column; margin-left: ${p => p.$ml}px; width: ${p => p.$w}px; gap: ${p => p.$g || 0}px;`;
const Line = styled.div`height: 17px; line-height: 17px; font-size: 12px; letter-spacing: ${p => p.$ls || 0}px; text-align: ${p => p.$a || 'left'};`;
const Gauge = styled.div`
  height: 15px; line-height: 13px; font-size: 12.2px; letter-spacing: -0.1px; border: 1px dashed #85856c; border-left: 0;
  background: linear-gradient(90deg, #85826f ${p => p.$v}%, transparent ${p => p.$v}%);
`;
const S = ({ children }) => <svg width="24" height="24" viewBox="0 0 24 24">{children}</svg>;

const tasks = [
  [0, <S><defs><linearGradient id="w" x2="1" y2="1"><stop stopColor="#7fe0ff" /><stop offset="1" stopColor="#1a9df5" /></linearGradient></defs><path d="M0.500 0.500H11.500V11.500H0.500ZM12.500 0.500H23.500V11.500H12.500ZM0.500 12.500H11.500V23.500H0.500ZM12.500 12.500H23.500V23.500H12.500Z" fill="url(#w)" /></S>],
  [0, <S><circle cx="13" cy="10" r="9" fill="#4b4d40" stroke="#eee" strokeWidth="2" /><path d="M6.500 16.500L2 21.500" stroke="#eee" strokeWidth="2.600" strokeLinecap="round" /></S>],
  [0, <S><rect x="6" y="1" width="18" height="16" rx="1" fill="#f3f3f3" /><path d="M0 7H18V22H0Z" fill="#666" /><path d="M6 7H18V17H6Z" fill="#aaa" /></S>],
  [0, <S><rect y="1" width="24" height="22" rx="1" fill="#0d6cc4" /><path d="M2 3H11V21H2Z" fill="#fff" /><path d="M13 3H22V12H13Z" fill="#65d6ff" /><path d="M13 13H22V17H13Z" fill="#29a5f5" /><path d="M13 18H22V21H13Z" fill="#0b8ae6" /></S>],
  [0, <S><path d="M12.500 1A11 11 0 1 1 6 21.500L1 23L2 16A11 11 0 0 1 12.500 1Z" fill="#6668cc" /><path d="M6 7.500H15V16.500H6ZM16 11L19 8.500V15.500L16 13Z" fill="#fff" /></S>],
  [0, <S><path d="M7.500 6V2H16.500V6" fill="none" stroke="#35b8ee" strokeWidth="2" /><rect x="1" y="6" width="22" height="17" rx="2.500" fill="#f5f5f5" /><path d="M7.500 10H11.700V14H7.500Z" fill="#f0502a" /><path d="M12.600 10H16.800V14H12.600Z" fill="#7db700" /><path d="M7.500 15H11.700V19H7.500Z" fill="#1aa2ee" /><path d="M12.600 15H16.800V19H12.600Z" fill="#fdb813" /></S>],
  [0, <S><path d="M0 3H24V21H0Z" fill="#3c3c3c" /><path d="M0 3H24V6H0Z" fill="#bbb" /><path d="M9 15.500H24V21H9Z" fill="#4fe3fb" /><path d="M3 8L8 12.500L3 17" fill="none" stroke="#ddd" strokeWidth="2" /></S>],
  [0, <S><circle cx="12" cy="12" r="12" fill="#e95420" /><circle cx="12" cy="12" r="5.500" fill="none" stroke="#fff" strokeWidth="2.200" /><g fill="#fff" stroke="#e95420" strokeWidth="1"><circle cx="5" cy="12" r="2.400" /><circle cx="15.500" cy="5.900" r="2.400" /><circle cx="15.500" cy="18.100" r="2.400" /></g></S>],
  [1, <S><path d="M0 3A1.500 1.500 0 0 1 1.500 1.500H8L10 4H24V22H0Z" fill="#e2a30f" /><path d="M0 6H24V21A1.500 1.500 0 0 1 22.500 22.500H1.500A1.500 1.500 0 0 1 0 21Z" fill="#ffcf48" /><path d="M4.500 22.500V17A2 2 0 0 1 6.500 15H17.500A2 2 0 0 1 19.500 17V22.500Z" fill="#1378cc" /><path d="M7 19H17" stroke="#0a4f94" strokeWidth="1.500" /></S>],
  [0, <S><path d="M8 4L10.500 7H16L18.500 4L19.500 11L18 13L19.500 20H7Q0 21 1 16Q4 20 7 18L8.500 13Z" fill="#1d3257" /><circle cx="11.500" cy="9.500" r="0.800" fill="#8cf" /><circle cx="16" cy="9.500" r="0.800" fill="#8cf" /></S>],
  [0, <S><rect x="2" y="2.500" width="20" height="19" rx="3" fill="#0a77bd" stroke="#e9f2f8" strokeWidth="1" /><path d="M6 6H11V17H6ZM13 6H18V12H13Z" fill="#fff" /></S>],
  [1, <S><circle cx="12" cy="12" r="11" fill="#35a452" /><path d="M12 12L21.800 7A11 11 0 0 1 12 23L16 14Z" fill="#fbd03b" /><path d="M2.500 6.500A11 11 0 0 1 21.800 7H12L7.500 14Z" fill="#e2483a" /><circle cx="12" cy="12" r="5.300" fill="#fff" /><circle cx="12" cy="12" r="4.200" fill="#4a86ec" /></S>],
  [1, <S><defs><linearGradient id="e" x2="1"><stop stopColor="#2aa6e0" /><stop offset="1" stopColor="#5fdc6b" /></linearGradient></defs><path d="M0.500 12A11.700 11.700 0 0 1 24 10.500C24 15 20 17 16.500 16.500Q13 16 14.500 13.500Q15.500 9 10 8.500Q3 8.500 0.500 12Z" fill="url(#e)" /><path d="M0.500 11Q4 7.500 10 8.500Q5 14 9 18.500Q14 23 21.500 18.500A11.600 11.600 0 0 1 0.500 11Z" fill="#1572c8" /><path d="M10 8.500Q14 8.500 14.500 12L13.500 14.500Q14 19 21.500 18.500Q16 24 10 20Q5 14 10 8.500Z" fill="#12529e" /></S>],
  [1, <S><path d="M1 1H11L13 8L5 14L0.500 10Z" fill="#fc2f63" /><path d="M0 12L6 10V18L3 16Z" fill="#f98a1d" /><path d="M14 3L18 1L24 8V19L16 24L10 20Z" fill="#1a6ef2" /><path d="M3 16L10 19L9 23L2 23Z" fill="#e0449b" /><path d="M5 5H19V19H5Z" fill="#000" /><text x="6" y="12" fontSize="8" fontWeight="700" fill="#fff" fontFamily="Liberation Mono, monospace">IJ</text><path d="M6.500 16H11.500" stroke="#fff" /></S>],
  [1, <S><rect x="1" y="1" width="22" height="22" rx="4.500" fill="#fafafa" /><text x="12" y="18" textAnchor="middle" fontSize="17" fontWeight="700" fill="#3a3a3a" fontFamily="Liberation Serif, serif">T</text></S>, true],
  [1, <S><path d="M0 0H24V24H0Z" fill="#f08705" /><path d="M15 4L24 13V24H11L5 19Z" fill="#d8720a" /><path d="M12 8L6.500 16M12 8L17.500 16" stroke="#fff" strokeWidth="1.800" /><path d="M8.500 3.500H15.500V10H8.500ZM3 14H9.500V20H3ZM14.500 14H21V20H14.500Z" fill="#fff" /></S>],
  [1, <S><g fill="none" strokeWidth="1.700"><path d="M3 12.500Q-1 6 4 3.500Q9 1 11 4.500Q12 7 9 8.500Q4.500 9.500 3 12.500Z" stroke="#3b82ee" /><path d="M14 8Q12.500 4 17 2.500Q22.500 5 21.500 12Q19.500 8.500 14 8Z" stroke="#f1a51e" /><path d="M5 12.500Q7 9.500 12 9.500Q17.500 9.500 19.500 12.500Q22 16 18.500 19.500Q12 24 6 19.500Q2.500 16 5 12.500Z" stroke="#57c13b" /></g></S>],
  [1, <S><circle cx="12" cy="12" r="12" fill="#2f95f3" /><path d="M6 5L17.500 9.500Q18.500 11 16.500 13.500H18L12 20L13 15.500L10 15L11 13.500Q7.500 12.500 7.500 10.500L9 10.600Q6 9 6 5Z" fill="#fff" /></S>],
  [1, <S><path d="M11 2.500A10 10 0 1 0 21.500 14" fill="none" stroke="#4468e8" strokeWidth="2.400" /><path d="M7 10.500L11.500 15L19.500 4.500" fill="none" stroke="#ffb000" strokeWidth="2.800" /></S>],
  [1, <WpsLogo s={22} />],
];

const Tray = ({ ml, children }) => <Cell $w={16} $ml={ml}><svg width="16" height="16" viewBox="0 0 16 16">{children}</svg></Cell>;

function TaskBar() {
  return (
    <Taskbar>
      {tasks.map(([run, icon, on], i) => <Task key={i} $run={run} $on={on}>{icon}</Task>)}
      <Spring />
      <Meter $w={91} $ml={0}><Line $ls={-0.1}>↑: 2.79 KB/s</Line><Line $ls={-0.1}>↓: 19.6 KB/s</Line></Meter>
      <Meter $w={60} $ml={0} $g={2}><Gauge $v={7}>CPU: 7 %</Gauge><Gauge $v={37}>内存: 37 %</Gauge></Meter>
      <Cell $w={12} $ml={8}><Icon w={12} h={7} c="#fff" d="M0.500 6.500L6 1L11.500 6.500" /></Cell>
      <Tray ml={10}><path d="M5 0L7.500 2.500H11.500L14 0L15 6L16 16H4Q0 16 0.500 12Q2 14 4 13Z" fill="#dcb588" /><circle cx="8" cy="5" r="0.800" fill="#333" /><circle cx="12" cy="5" r="0.800" fill="#333" /></Tray>
      <Tray ml={8}><ellipse cx="6" cy="6" rx="6" ry="5.200" fill="#2fd15c" /><ellipse cx="11.500" cy="10.500" rx="4.700" ry="4.200" fill="#e9e9e9" /><circle cx="4" cy="4.500" r="0.800" fill="#0a5" /><circle cx="8" cy="4.500" r="0.800" fill="#0a5" /></Tray>
      <Tray ml={8}><path d="M2 9A4.500 4.500 0 0 1 10 5Q14 6 14 10L4 12Z" fill="#a8a8a8" /><path d="M3 13.500A3 3 0 0 1 3 8Q8 6 11 9Q16 9 16 12Q16 13.500 14 13.500Z" fill="#f5f5f5" /></Tray>
      <Tray ml={8}><path d="M8 0L15 2.500V8Q14 13 8 15.500Q1 12 1 8V2.500Z" fill="#1682dc" /><path d="M8 0V15.500Q1 12 1 8V2.500Z" fill="#3aa6f0" /><circle cx="11.500" cy="11" r="4.500" fill="#13921c" /><path d="M9.500 11L11 12.500L13.500 9.800" stroke="#fff" fill="none" /></Tray>
      <Label $ml={12} $s={15}>英</Label>
      <Label $ml={23} $s={15}>拼</Label>
      <Cell $w={17} $ml={22}><Icon w={17} h={16} c="#fff" d="M10 2H1V12H13V8M4 15H10M7 12V15M12 1H15.500V5H12ZM13.800 5V12" /></Cell>
      <Cell $w={16} $ml={7}><Icon w={16} h={14} c="#fff" d="M1 5H3.500L7 1.500V12.500L3.500 9H1ZM9 5Q10.500 7 9 9M11 3.500Q13.500 7 11 10.500M13 2Q16.500 7 13 12" /></Cell>
      <Meter $w={70} $ml={2}><Line $a="right" $ls={-0.4}>15:49</Line><Line $a="right" $ls={-0.5}>2021/11/29</Line></Meter>
      <Cell $w={14} $ml={10}><Icon w={14} h={14} c="#fff" d="M7 0.500Q13 2 12.500 8Q10.500 14 4.500 13Q2 12.500 1 10.500Q8 10.500 7 0.500Z" /></Cell>
      <Cell $w={20} />
    </Taskbar>
  );
}

/* ---------- Explorer window ---------- */
const Explorer = styled.div`
  position: absolute; left: 1300px; top: 160px; width: 196px; height: 802px; border: 1px solid #bdbdbd; border-radius: 8px; background: #fff;
  display: flex; flex-direction: column; overflow: hidden;
`;
const ExHead = styled.div`height: 84px; background: #f3f3f3; border-bottom: 1px solid #dcdcdc; display: flex; padding: 9px 17px 0 0; justify-content: flex-end; gap: 35px;`;
const ExSearch = styled.div`width: 201px; height: 35px; margin: 10px 0 0 -19px; border: 1px solid #d6d6d6;`;
const ExFoot = styled.div`margin-top: auto; height: 23px; display: flex; justify-content: flex-end; align-items: center; gap: 5px; padding-right: 9px;`;
const ExView = styled.div`width: 22px; height: 23px; border: 1px solid #26a0da; background: #d0e8f5; display: flex; align-items: center; justify-content: center; padding-left: 2px;`;

/* ---------- Typora window ---------- */
const Typora = styled.div`
  position: absolute; left: 74px; top: 112px; width: 1335px; height: 855px; border: 1px solid #0078d7; border-top: 0; border-radius: 8px;
  background: #fff; overflow: hidden; display: flex; flex-direction: column;
`;
const TTitle = styled.div`flex: none; height: 31px; background: #0078d7; color: #fff; display: flex; align-items: center; padding: 0 18px 0 8px;`;
const TMenu = styled.div`flex: none; height: 20px; display: flex; align-items: center; padding: 2px 0 0 6px; color: #111; line-height: 18px; u { text-underline-offset: 2px; }`;
const TItem = styled.div`width: ${p => p.$w}px;`;
const TBody = styled.div`height: 803px; display: flex;`;
const Side = styled.div`width: 287px; background: #fafafa; border-right: 1px solid #e3e3e3; display: flex;`;
const SideMain = styled.div`width: 278px; font-family: ${DOC};`;
const SideTabs = styled.div`display: flex; height: 45px; padding-left: 39px; gap: 40px;`;
const SideTab = styled.div`
  width: 84px; height: 45px; padding-top: 16px; text-align: center; font-size: 14px; line-height: 20px; color: ${p => (p.$on ? '#222' : '#777')};
  font-weight: ${p => (p.$on ? 700 : 400)}; border-bottom: ${p => (p.$on ? '4px solid #333' : '0')};
`;
const Outline = styled.div`padding-top: 3px;`;
const OItem = styled.div`
  padding: 4px 0 4px ${p => [0, 18, 32, 46][p.$l]}px; font-size: 14px; line-height: 17px; color: #383838; font-weight: ${p => (p.$on ? 700 : 400)}; white-space: pre;
  letter-spacing: ${p => (p.$l === 1 ? -0.35 : 0)}px;
`;
const Bar = styled.div`width: 8px; height: ${p => p.$h}px; margin-top: ${p => p.$mt}px; background: #aeaeae;`;
const Editor = styled.div`width: 1046px; display: flex; flex-direction: column;`;
const Scroll = styled.div`height: 803px; overflow: hidden; display: flex;`;
const Doc = styled.div`width: 1038px; padding: 0 119px; font: 16px/26px ${DOC}; color: #333;`;
const P = styled.div`height: 26px; line-height: 26px; margin-top: ${p => p.$mt}px; padding-left: ${p => p.$in || 0}px; color: ${p => p.$c || '#333'};`;
const H = styled.div`
  height: ${p => p.$h}px; line-height: ${p => p.$h + (p.$s === 28 ? 1 : -1)}px; margin-top: ${p => p.$mt}px; font-size: ${p => p.$s}px; font-weight: 700; color: #333;
  border-bottom: ${p => (p.$u ? '1px solid #eee' : '0')};
`;
const Quote = styled.div`height: 26px; line-height: 25px; margin: 17px 0 0 30px; padding-left: 14px; border-left: 4px solid #dfe2e5; color: #777;`;
const Code = styled.code`
  font: 14.4px/14px 'DejaVu Sans Mono', monospace; padding: 0 2px; border: 1px solid #e7eaed; border-radius: 3px; background: #f3f4f4; margin-left: ${p => p.$ml || 0}px;
`;
const Marker = styled.span`display: inline-block; width: 30px; padding-left: ${p => p.$pl}px;`;
const Bullet = styled.i`display: inline-block; width: 6px; height: 6px; border-radius: 50%; background: #333; vertical-align: 2px;`;
const LinkBlock = styled.div`margin-top: 12px; height: 51px; line-height: 25px; color: #bbb; padding-top: 1px;`;
const Href = styled.span`color: ${p => p.$c || '#4183c4'}; text-decoration: ${p => (p.$plain ? 'none' : 'underline')}; text-underline-offset: 2px;`;
const Typo = styled.span`text-decoration: underline wavy #e01010 0.7px; text-underline-offset: 3px;`;
const CaretLine = styled.span`display: inline-block; width: 1px; height: 22px; margin-right: -1px; background: #2255aa; vertical-align: -5px;`;
const Foot = styled.div`
  position: absolute; left: 287px; right: 9px; bottom: 3px; height: 24px; display: flex; align-items: center; padding: 0 27px 0 12px; color: #666;
`;

const outline = [
  [3, '2.分析'], [3, '3.实现'], [3, '问题记录'], [2, '进程逻辑完善'], [3, '1.需求'], [1, '11.8日-11.14日'], [2, '各模块添加时间查询'], [3, '1.实现'],
  [2, '告警修改'], [3, '2.总结'], [1, '11.18日-11.21日'], [2, '18【风险评估】综合风险评估提级管\n控清单'], [3, '1.需求'], [3, '2.分析'],
  [2, '18-19 作业准备、作业终结的告警'], [3, '1.需求'], [3, '2.分析'], [3, '3.总结'], [2, '19 360全景图及作业风险标识数据导\n入（需提供台账数据）（台账缺少较\n多）'],
  [3, '1.需求'], [3, '2.分析'], [2, '3.实现', true], [3, '1. 添加接口'], [3, '2.整理数据'], [2, '4.问题'], [1, '11.22日-11月28日'], [2, 'GIs地图处理'], [1, '11.29日-12.3日'],
];

function TyporaWindow() {
  return (
    <Typora>
      <TTitle>
        <svg width="16" height="16" viewBox="0 0 16 16"><rect x="0.500" y="0.500" width="15" height="15" rx="3.500" fill="#fafafa" /><text x="8" y="12.300" textAnchor="middle" fontSize="12" fontWeight="700" fill="#333" fontFamily="Liberation Serif, serif">T</text></svg>
        <Label $ml={5} $ls={0.25} $pt={1}>七张图项目需求实现.md• - Typora</Label>
        <Spring />
        <Icon w={10} h={10} c="#fff" d="M0 5.500H10" />
        <Cell $w={11} $ml={35}><Icon w={11} h={10} c="#fff" d="M0.500 0.500H9.500V9.500H0.500Z" /></Cell>
        <Cell $w={10} $ml={35}><Icon w={10} h={10} c="#fff" d="M0.500 0.500L9.500 9.500M9.500 0.500L0.500 9.500" /></Cell>
      </TTitle>
      <TMenu>
        {[['文件', 'F', 51], ['编辑', 'E', 51], ['段落', 'P', 52], ['格式', 'O', 54], ['视图', 'V', 53], ['主题', 'T', 51], ['帮助', 'H', 50]].map(([t, k, w]) => (
          <TItem key={k} $w={w}>{t}(<u>{k}</u>)</TItem>
        ))}
      </TMenu>
      <TBody>
        <Side>
          <SideMain>
            <SideTabs><SideTab>文件</SideTab><SideTab $on>大纲</SideTab></SideTabs>
            <Outline>{outline.map(([l, t, on], i) => <OItem key={i} $l={l} $on={on}>{t}</OItem>)}</Outline>
          </SideMain>
          <Bar $h={89} $mt={714} />
        </Side>
        <Editor>
          <Scroll>
            <Doc>
              <P $mt={-9}>实现步骤</P>
              <P $mt={10}><Marker $pl={13}>1.</Marker>按照规范，导入<b>地图资源</b></P>
              <P $mt={7} $in={30}>2.1 导入的数据处理地点逻辑，填写表<Code>ass_dc_risk_point_360</Code></P>
              <P $mt={8} $in={30}>2.2 导入数据的影像路径和影像数据处理，设置影像，填写表<Code>ass_dc_risk_point_pic_360</Code>。</P>
              <Quote>处理的逻辑参考<Code>/upload360File</Code></Quote>
              <H $mt={17} $h={34} $s={28} $u>3.实现</H>
              <H $mt={18} $h={30} $s={24}>1. 添加接口</H>
              <P $mt={17}><Marker $pl={12}><Bullet /></Marker>导入360安装点与影像数据 <Code $ml={4}>/import</Code></P>
              <P $mt={8}><Marker $pl={12}><Bullet /></Marker><s>下载导入模板</s> <Code $ml={4}>/downloadTemplate</Code></P>
              <H $mt={20} $h={30} $s={24}>2.整理数据</H>
              <P $mt={16}>2.1 导入数据</P>
              <P $mt={12}>数据的规范以文档为准。</P>
              <P $mt={12}>2.2 整理文档</P>
              <LinkBlock>
                [<Href>E:\<Typo>OneDrive</Typo>\<Typo>MyFileAndRecords</Typo>\公司记录\2 七张图项目\我写的文档</Href><CaretLine />](<Href $c="#5a8a96">E:\OneDrive\MyFileAndRecords\公司记</Href><br />
                <Href $c="#5a8a96">录\2 七张图项目\我写的文档\360影像数据导入规则.docx</Href>)
              </LinkBlock>
              <H $mt={17} $h={34} $s={28} $u>4.问题</H>
              <P $mt={15}><s>导入excel时，资源的位置需要存在服务器中才能导入。不能导入本地的资源。</s></P>
              <H $mt={16} $h={44} $s={36} $u>11.22日-11月28日</H>
              <H $mt={17} $h={34} $s={28} $u>GIs地图处理</H>
              <P $mt={15}><Href $plain>10.28 搭建反向代理使用地图服务</Href> <b>完成</b></P>
            </Doc>
            <Bar $h={42} $mt={758} />
          </Scroll>
        </Editor>
      </TBody>
      <Foot>
        <Icon w={6} h={10} c="#555" sw={1.4} d="M5 0.500L0.800 5L5 9.500" />
        <Cell $w={15} $ml={20}><Icon w={15} h={10} c="#777" d="M4 1.500L0.500 5L4 8.500M11 1.500L14.500 5L11 8.500M8.500 0L6.500 10" /></Cell>
        <Spring /><Label $ls={-0.3} $pt={1}>14321 词</Label>
      </Foot>
    </Typora>
  );
}

export default function App() {
  return (
    <>
      <Global />
      <Screen>
        <Title />
        <Menu />
        <RibbonBar />
        <WorkArea />
        <StatusBar />
        <TaskBar />
        <Explorer>
          <ExHead>
            <Icon w={11} h={11} c="#888" d="M1 1H10V10H1Z" /><Icon w={11} h={11} c="#888" d="M1 1L10 10M10 1L1 10" />
          </ExHead>
          <ExSearch />
          <ExFoot>
            <ExView><Icon w={12} h={12} c="#000" d="M1 1.500H11M1 4.500H11M1 7.500H11M1 10.500H11" /></ExView>
            <Icon w={12} h={13} c="#000" d="M1 1H11V9H1ZM1 12H11" />
          </ExFoot>
        </Explorer>
        <TyporaWindow />
      </Screen>
    </>
  );
}
